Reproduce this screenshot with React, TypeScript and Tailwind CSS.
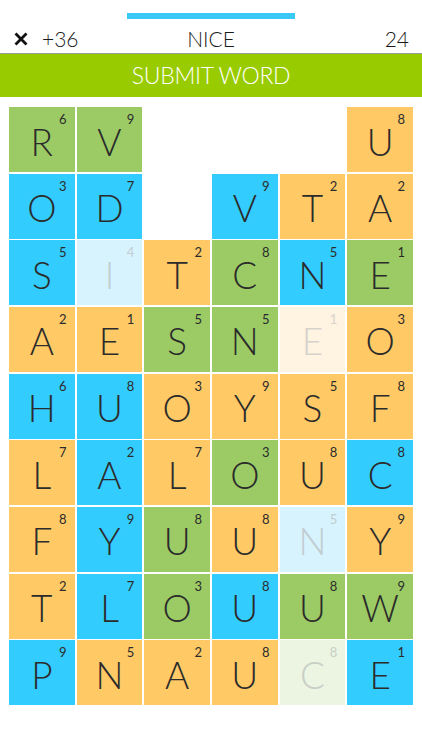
import React from "react";

type Tile = { l: string; n: number; c: "g" | "b" | "o" | "fb" | "fo" | "fg" } | null;

const colors: Record<string, string> = {
  g: "bg-[#9ccb66] text-[#2b2b2b]",
  b: "bg-[#33ccfe] text-[#2b2b2b]",
  o: "bg-[#ffc966] text-[#2b2b2b]",
  fb: "bg-[#d7f4fe] text-[#c2ccd2]",
  fo: "bg-[#fff3e2] text-[#d6d2cc]",
  fg: "bg-[#ebf5e2] text-[#c9cec6]",
};

const t = (l: string, n: number, c: "g" | "b" | "o" | "fb" | "fo" | "fg"): Tile => ({ l, n, c });

const board: Tile[][] = [
  [t("R", 6, "g"), t("V", 9, "g"), null, null, null, t("U", 8, "o")],
  [t("O", 3, "b"), t("D", 7, "b"), null, t("V", 9, "b"), t("T", 2, "o"), t("A", 2, "o")],
  [t("S", 5, "b"), t("I", 4, "fb"), t("T", 2, "o"), t("C", 8, "g"), t("N", 5, "b"), t("E", 1, "g")],
  [t("A", 2, "o"), t("E", 1, "o"), t("S", 5, "g"), t("N", 5, "g"), t("E", 1, "fo"), t("O", 3, "o")],
  [t("H", 6, "b"), t("U", 8, "b"), t("O", 3, "o"), t("Y", 9, "o"), t("S", 5, "o"), t("F", 8, "o")],
  [t("L", 7, "o"), t("A", 2, "b"), t("L", 7, "o"), t("O", 3, "g"), t("U", 8, "o"), t("C", 8, "b")],
  [t("F", 8, "o"), t("Y", 9, "b"), t("U", 8, "g"), t("U", 8, "o"), t("N", 5, "fb"), t("Y", 9, "o")],
  [t("T", 2, "o"), t("L", 7, "b"), t("O", 3, "g"), t("U", 8, "b"), t("U", 8, "g"), t("W", 9, "g")],
  [t("P", 9, "b"), t("N", 5, "o"), t("A", 2, "o"), t("U", 8, "o"), t("C", 8, "fg"), t("E", 1, "b")],
];

export default function App() {
  return (
    <div className="w-[422px] h-[750px] bg-white overflow-hidden text-[#1a1a1a]" style={{ fontFamily: "Lato, 'Liberation Sans', sans-serif" }}>
      {/* progress */}
      <div className="flex justify-center pt-[13px]">
        <div className="w-[168px] h-[6px] bg-[#3ac8f6]" />
      </div>

      {/* header */}
      <div className="relative flex items-center h-[35px] pt-[4px] px-[13px] border-b border-[#9a9a9a]">
        <div className="flex items-center gap-[13px]">
          <svg width="16" height="16" viewBox="0 0 16 16" className="mt-[1px]">
            <path d="M2.5 2.5 L13.5 13.5 M13.5 2.5 L2.5 13.5" stroke="#111" strokeWidth="2.8" strokeLinecap="butt" />
          </svg>
          <span className="text-[21px] font-light leading-none">+36</span>
        </div>
        <span className="absolute left-0 right-0 text-center text-[21px] font-light leading-none pointer-events-none">NICE</span>
        <span className="ml-auto text-[21px] font-light leading-none">24</span>
      </div>

      {/* submit */}
      <div className="h-[43px] bg-[#99cc00] flex items-center justify-center">
        <span className="text-white text-[23px] font-light tracking-[-0.3px]">SUBMIT WORD</span>
      </div>

      {/* board */}
      <div className="pt-[10px] px-[9px]">
        <div className="grid grid-cols-6 gap-x-[2px] gap-y-[1.67px]">
          {board.flat().map((tile, i) =>
            tile ? (
              <div key={i} className={`relative h-[65px] flex items-center justify-center ${colors[tile.c]}`}>
                <span className="text-[37px] font-light leading-none mt-[3px]">{tile.l}</span>
                <span className="absolute top-[6px] right-[8px] text-[13px] leading-none">{tile.n}</span>
              </div>
            ) : (
              <div key={i} className="h-[65px]" />
            )
          )}
        </div>
      </div>
    </div>
  );
}
